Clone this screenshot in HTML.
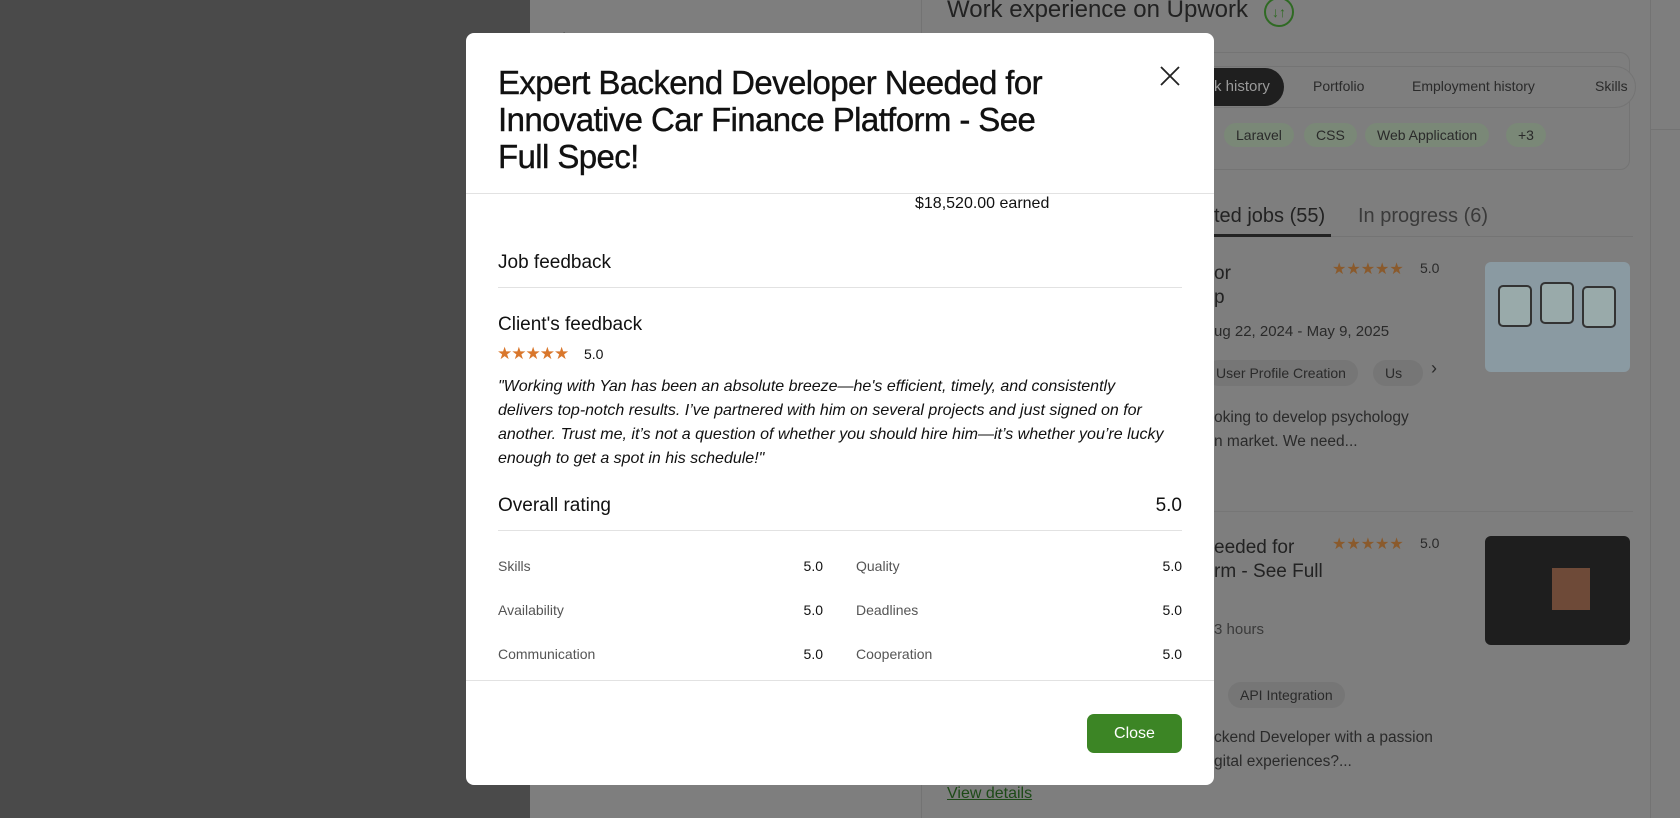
<!DOCTYPE html>
<html><head><meta charset="utf-8">
<style>
*{margin:0;padding:0;box-sizing:border-box}
body{width:1680px;height:818px;overflow:hidden;background:#7e7e7e;font-family:"Liberation Sans",sans-serif;position:relative;color:#1a1a1a}
.a{position:absolute;white-space:nowrap}
.bg{color:#2a2a2a}
.chip{position:absolute;height:24px;border-radius:12px;background:#7a8877;color:#2a2a2a;font-size:14px;line-height:24px;padding:0 12px}
.gchip{position:absolute;height:26px;border-radius:13px;background:#767676;color:#2a2a2a;font-size:14px;line-height:26px;padding:0 12px}
.st{color:#8a5a2c;font-size:16px;letter-spacing:0}
.mst{color:#d9772c;font-size:17px;letter-spacing:-1px}
.lbl{font-size:14px;color:#555}
.val{font-size:14px;color:#111;text-align:right}
</style></head><body>
<div class="a" style="left:0;top:0;width:530px;height:818px;background:#4a4a4a"></div>
<div class="a" style="left:921px;top:0;width:1px;height:818px;background:#737373"></div>
<div class="a" style="left:1650px;top:0;width:1px;height:818px;background:#737373"></div>
<div class="a" style="left:1650px;top:0;width:30px;height:130px;border-bottom:1px solid #737373"></div>
<div class="a bg" style="left:555px;top:16px;font-size:26px">&#8592;</div>
<div class="a bg" style="left:947px;top:-4px;font-size:24px;color:#222">Work experience on Upwork</div>
<div class="a" style="left:1264px;top:-3px;width:30px;height:30px;border:2px solid #2f6a23;border-radius:50%;color:#2f6a23;font-size:14px;text-align:center;line-height:26px">&#8595;&#8593;</div>
<div class="a" style="left:1140px;top:52px;width:490px;height:118px;border:1px solid #747474;border-radius:10px"></div>
<div class="a" style="left:1140px;top:66px;width:496px;height:42px;border:1px solid #747474;border-radius:21px;background:#7e7e7e"></div>
<div class="a" style="left:1150px;top:68px;width:134px;height:38px;border-radius:19px;background:#1f1f1f;color:#9a9a9a;font-size:15px;line-height:38px;padding-left:64px">k history</div>
<div class="a bg" style="left:1313px;top:78px;font-size:14px">Portfolio</div>
<div class="a bg" style="left:1412px;top:78px;font-size:14px">Employment history</div>
<div class="a bg" style="left:1595px;top:78px;font-size:14px">Skills</div>
<div class="chip" style="left:1224px;top:123px">Laravel</div>
<div class="chip" style="left:1304px;top:123px">CSS</div>
<div class="chip" style="left:1365px;top:123px">Web Application</div>
<div class="chip" style="left:1506px;top:123px">+3</div>
<div class="a bg" style="left:1214px;top:205px;font-size:20px;color:#222">ted jobs (55)</div>
<div class="a" style="left:1214px;top:234px;width:117px;height:3px;background:#222"></div>
<div class="a" style="left:1331px;top:236px;width:302px;height:1px;background:#747474"></div>
<div class="a bg" style="left:1358px;top:205px;font-size:20px;color:#3a3a3a">In progress (6)</div>
<div class="a bg" style="left:1214px;top:262px;font-size:19px;line-height:24px;color:#222">or<br>p</div>
<div class="a st" style="left:1332px;top:259px">★★★★★</div>
<div class="a bg" style="left:1420px;top:260px;font-size:14px">5.0</div>
<div class="a bg" style="left:1214px;top:323px;font-size:15px">ug 22, 2024 - May 9, 2025</div>
<div class="gchip" style="left:1206px;top:360px;padding-left:10px">User Profile Creation</div>
<div class="gchip" style="left:1373px;top:360px;width:50px;overflow:hidden">Us</div>
<div class="a bg" style="left:1431px;top:358px;font-size:18px">›</div>
<div class="a bg" style="left:1214px;top:406px;font-size:15.5px;line-height:24px">oking to develop psychology<br>n market. We need...</div>
<div class="a" style="left:1485px;top:262px;width:145px;height:110px;border-radius:6px;background:#8a9aa2"></div>
<div class="a" style="left:1498px;top:285px;width:34px;height:42px;border:2px solid #333;border-radius:5px;background:#9aa"></div>
<div class="a" style="left:1540px;top:282px;width:34px;height:42px;border:2px solid #333;border-radius:5px;background:#9aa"></div>
<div class="a" style="left:1582px;top:286px;width:34px;height:42px;border:2px solid #333;border-radius:5px;background:#9aa"></div>
<div class="a" style="left:1214px;top:511px;width:419px;height:1px;background:#767676"></div>
<div class="a bg" style="left:1214px;top:536px;font-size:19px;line-height:24px;color:#222">eeded for<br>rm - See Full</div>
<div class="a st" style="left:1332px;top:534px">★★★★★</div>
<div class="a bg" style="left:1420px;top:535px;font-size:14px">5.0</div>
<div class="a bg" style="left:1214px;top:621px;font-size:15px;color:#3a3a3a">3 hours</div>
<div class="a" style="left:1485px;top:536px;width:145px;height:109px;border-radius:6px;background:#1e1e1e"></div>
<div class="a" style="left:1552px;top:568px;width:38px;height:42px;background:#6e4a38"></div>
<div class="gchip" style="left:1228px;top:682px">API Integration</div>
<div class="a bg" style="left:1214px;top:726px;font-size:15.5px;line-height:24px">ckend Developer with a passion<br>gital experiences?...</div>
<div class="a" style="left:947px;top:785px;font-size:16px;color:#1d4a17;text-decoration:underline">View details</div>

<div class="a" style="left:466px;top:33px;width:748px;height:752px;background:#fff;border-radius:8px;overflow:hidden">
 <div class="a" style="left:32px;top:31px;font-size:33px;line-height:37px;letter-spacing:-0.6px;color:#111;white-space:normal;width:580px;-webkit-text-stroke:0.4px #111">Expert Backend Developer Needed for Innovative Car Finance Platform - See Full Spec!</div>
 <svg class="a" style="left:693px;top:32px" width="22" height="22" viewBox="0 0 22 22"><path d="M2 2L20 20M20 2L2 20" stroke="#222" stroke-width="1.8"/></svg>
 <div class="a" style="left:0;top:160px;width:748px;height:1px;background:#e2e2e2"></div>
 <div class="a" style="left:449px;top:162px;font-size:16px;color:#111">$18,520.00 earned</div>
 <div class="a" style="left:32px;top:219px;font-size:19px;color:#111">Job feedback</div>
 <div class="a" style="left:32px;top:254px;width:684px;height:1px;background:#e2e2e2"></div>
 <div class="a" style="left:32px;top:281px;font-size:19px;color:#111">Client's feedback</div>
 <div class="a mst" style="left:31px;top:311px">★★★★★</div>
 <div class="a" style="left:118px;top:313px;font-size:14px;color:#111">5.0</div>
 <div class="a" style="left:32px;top:342px;font-size:16px;line-height:24px;font-style:italic;color:#111">"Working with Yan has been an absolute breeze—he's efficient, timely, and consistently<br>delivers top-notch results. I’ve partnered with him on several projects and just signed on for<br>another. Trust me, it’s not a question of whether you should hire him—it’s whether you’re lucky<br>enough to get a spot in his schedule!"</div>
 <div class="a" style="left:32px;top:462px;font-size:19px;color:#111">Overall rating</div>
 <div class="a" style="right:32px;top:462px;font-size:19px;color:#111">5.0</div>
 <div class="a" style="left:32px;top:497px;width:684px;height:1px;background:#e2e2e2"></div>
 <div class="a lbl" style="left:32px;top:525px">Skills</div>
 <div class="a val" style="right:391px;top:525px">5.0</div>
 <div class="a lbl" style="left:390px;top:525px">Quality</div>
 <div class="a val" style="right:32px;top:525px">5.0</div>
 <div class="a lbl" style="left:32px;top:569px">Availability</div>
 <div class="a val" style="right:391px;top:569px">5.0</div>
 <div class="a lbl" style="left:390px;top:569px">Deadlines</div>
 <div class="a val" style="right:32px;top:569px">5.0</div>
 <div class="a lbl" style="left:32px;top:613px">Communication</div>
 <div class="a val" style="right:391px;top:613px">5.0</div>
 <div class="a lbl" style="left:390px;top:613px">Cooperation</div>
 <div class="a val" style="right:32px;top:613px">5.0</div>
 <div class="a" style="left:0;top:647px;width:748px;height:1px;background:#e2e2e2"></div>
 <div class="a" style="left:621px;top:681px;width:95px;height:39px;border-radius:7px;background:#3c8525;color:#fff;font-size:16px;text-align:center;line-height:39px">Close</div>
</div>
</body></html>
